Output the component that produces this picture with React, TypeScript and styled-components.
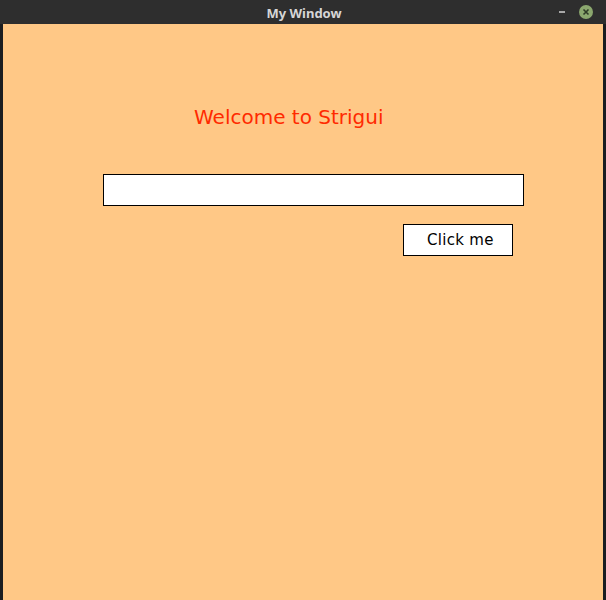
import React from "react";
import styled, { createGlobalStyle } from "styled-components";

const Global = createGlobalStyle`
  html, body { margin: 0; padding: 0; background: #1e1f21; }
  #root { width: 606px; height: 600px; }
`;

const Frame = styled.div`
  width: 606px;
  height: 600px;
  display: flex;
  flex-direction: column;
  background: #1c1e20;
  overflow: hidden;
`;

const TitleBar = styled.div`
  height: 24px;
  flex: none;
  background: #2e2e2e;
  display: flex;
  align-items: center;
  justify-content: center;
  position: relative;
`;

const Title = styled.span`
  font-family: "Noto Sans", "DejaVu Sans", sans-serif;
  font-weight: 700;
  font-size: 13px;
  color: #d6d6d6;
  margin-left: 2px;
  margin-top: 2px;
`;

const Controls = styled.div`
  position: absolute;
  right: 13px;
  top: 5px;
  display: flex;
  align-items: center;
  gap: 14px;
`;

const Minimize = styled.div`
  width: 6px;
  height: 2px;
  background: #a8a8a8;
`;

const CloseBtn = styled.div`
  width: 14px;
  height: 14px;
  border-radius: 50%;
  background: #8ba76e;
  display: flex;
  align-items: center;
  justify-content: center;
`;

const Body = styled.div`
  flex: 1;
  display: flex;
`;

const Edge = styled.div<{ $w: number }>`
  width: ${(p) => p.$w}px;
  flex: none;
  background: #1b1d20;
`;

const Content = styled.div`
  flex: 1;
  background: #ffc886;
  display: flex;
  flex-direction: column;
  align-items: flex-start;
`;

const Heading = styled.div`
  font-family: "DejaVu Sans", sans-serif;
  font-size: 20px;
  line-height: 23px;
  color: #ff2a00;
  margin: 82px 0 0 191px;
`;

const TextInput = styled.input`
  box-sizing: border-box;
  width: 421px;
  height: 32px;
  margin: 45px 0 0 100px;
  border: 1px solid #000;
  background: #fff;
  outline: none;
  padding: 0 6px;
  font-family: "DejaVu Sans", sans-serif;
  font-size: 15px;
`;

const Button = styled.button`
  box-sizing: border-box;
  width: 110px;
  height: 32px;
  margin: 18px 0 0 400px;
  border: 1px solid #000;
  background: #fff;
  font-family: "DejaVu Sans", sans-serif;
  font-size: 15px;
  color: #000;
  padding: 0 0 1px 23px;
  text-align: left;
  letter-spacing: 0.3px;
  cursor: pointer;
`;

export default function App() {
  return (
    <>
      <Global />
      <Frame>
        <TitleBar>
          <Title>My Window</Title>
          <Controls>
            <Minimize />
            <CloseBtn>
              <svg width="8" height="8" viewBox="0 0 8 8">
                <path d="M1.5 1.5 L6.5 6.5 M6.5 1.5 L1.5 6.5" stroke="#2e3a26" strokeWidth="1.6" />
              </svg>
            </CloseBtn>
          </Controls>
        </TitleBar>
        <Body>
          <Edge $w={3} />
          <Content>
            <Heading>Welcome to Strigui</Heading>
            <TextInput />
            <Button>Click me</Button>
          </Content>
          <Edge $w={3} />
        </Body>
      </Frame>
    </>
  );
}
